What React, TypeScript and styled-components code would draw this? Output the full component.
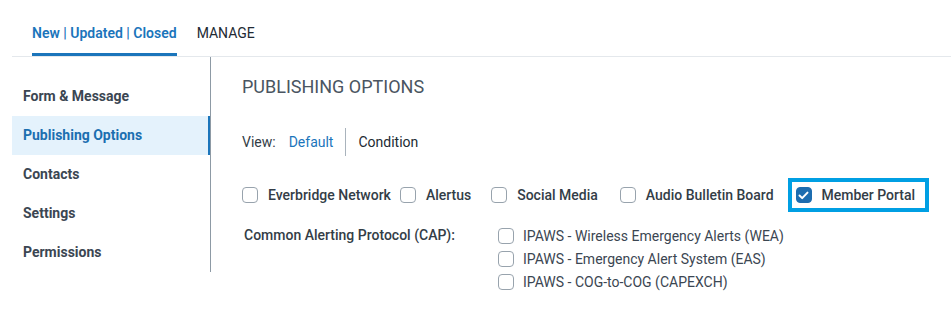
import React, { useState } from 'react';
import styled, { createGlobalStyle } from 'styled-components';

const GlobalStyle = createGlobalStyle`
  body {
    margin: 0;
    background: #ffffff;
    font-family: Roboto, "Liberation Sans", Arial, sans-serif;
    color: #333d47;
  }
`;

const Page = styled.div`
  padding-left: 12px;
  width: 939px;
`;

const TabBar = styled.div`
  display: flex;
  gap: 20px;
  padding-left: 20px;
  border-bottom: 1px solid #e4e8ec;
`;

const Tab = styled.div<{ active?: boolean }>`
  padding: 24px 0 11px;
  line-height: 18px;
  font-size: 14px;
  font-weight: ${({ active }) => (active ? 600 : 400)};
  color: ${({ active }) => (active ? '#1b75bb' : '#222a33')};
  border-bottom: 3px solid ${({ active }) => (active ? '#1b75bb' : 'transparent')};
`;

const Body = styled.div`
  display: flex;
  align-items: flex-start;
`;

const Sidebar = styled.nav`
  width: 198px;
  padding-top: 20px;
  border-right: 1px solid #8d9aa5;
`;

const NavItem = styled.div<{ active?: boolean }>`
  height: 39px;
  display: flex;
  align-items: center;
  padding-left: 11px;
  padding-bottom: 1px;
  box-sizing: border-box;
  font-size: 14px;
  font-weight: 700;
  color: ${({ active }) => (active ? '#1b6fb0' : '#3b4652')};
  background: ${({ active }) => (active ? '#e4f2fc' : 'transparent')};
  border-right: 2px solid ${({ active }) => (active ? '#1b75bb' : 'transparent')};
`;

const Main = styled.section`
  flex: 1;
  padding: 20px 0 0 31px;
`;

const Heading = styled.h2`
  margin: 0;
  font-size: 18px;
  line-height: 20px;
  font-weight: 400;
  color: #4a5561;
`;

const ViewRow = styled.div`
  display: flex;
  align-items: center;
  height: 28px;
  margin-top: 31px;
  font-size: 14px;
`;

const ViewLabel = styled.span`
  color: #333d47;
  margin-right: 13px;
`;

const ViewLink = styled.span<{ active?: boolean }>`
  color: ${({ active }) => (active ? '#1b75bb' : '#222a33')};
`;

const ViewDivider = styled.span`
  width: 1px;
  align-self: stretch;
  background: #a9b3bc;
  margin: 0 12px;
`;

const OptionsRow = styled.div`
  display: flex;
  align-items: center;
  height: 34px;
  margin-top: 22px;
`;

const Option = styled.label<{ trail: number; highlight?: boolean }>`
  display: flex;
  align-items: center;
  gap: 10px;
  font-size: 14px;
  font-weight: 500;
  color: #333d47;
  margin-right: ${({ trail }) => trail}px;
  ${({ highlight }) =>
    highlight
      ? `
    border: 4px solid #009fe3;
    height: 26px;
    padding: 0 10px 0 4px;
    margin-left: 4px;
  `
      : ''}
`;

const Box = styled.span<{ checked?: boolean }>`
  width: 16px;
  height: 16px;
  box-sizing: border-box;
  border-radius: 4px;
  border: 1px solid ${({ checked }) => (checked ? '#1d6db0' : '#98a3ad')};
  background: ${({ checked }) => (checked ? '#1d6db0' : '#fff')};
  display: flex;
  align-items: center;
  justify-content: center;
  flex: none;
`;

const CapRow = styled.div`
  display: grid;
  grid-template-columns: 256px 1fr;
  margin-top: 12px;
`;

const CapLabel = styled.div`
  font-size: 14px;
  font-weight: 500;
  padding-left: 2px;
  line-height: 23px;
  color: #333d47;
`;

const CapList = styled.div`
  display: flex;
  flex-direction: column;
`;

const CapOption = styled.label`
  display: flex;
  align-items: center;
  gap: 9px;
  height: 23px;
  font-size: 14px;
  color: #3b4652;
`;

function Checkbox({ checked }: { checked?: boolean }) {
  return (
    <Box checked={checked}>
      {checked && (
        <svg width="11" height="9" viewBox="0 0 11 9">
          <path d="M1.5 4.5 L4.2 7.1 L9.5 1.6" fill="none" stroke="#fff" strokeWidth="2" strokeLinecap="round" strokeLinejoin="round" />
        </svg>
      )}
    </Box>
  );
}

const NAV = ['Form & Message', 'Publishing Options', 'Contacts', 'Settings', 'Permissions'];

const OPTIONS = [
  { label: 'Everbridge Network', trail: 9 },
  { label: 'Alertus', trail: 20 },
  { label: 'Social Media', trail: 22 },
  { label: 'Audio Bulletin Board', trail: 10 },
];

const CAP = [
  'IPAWS - Wireless Emergency Alerts (WEA)',
  'IPAWS - Emergency Alert System (EAS)',
  'IPAWS - COG-to-COG (CAPEXCH)',
];

export default function App() {
  const [active] = useState('Publishing Options');
  return (
    <Page>
      <GlobalStyle />
      <TabBar>
        <Tab active>New | Updated | Closed</Tab>
        <Tab>MANAGE</Tab>
      </TabBar>
      <Body>
        <Sidebar>
          {NAV.map((n) => (
            <NavItem key={n} active={n === active}>
              {n}
            </NavItem>
          ))}
        </Sidebar>
        <Main>
          <Heading>PUBLISHING OPTIONS</Heading>
          <ViewRow>
            <ViewLabel>View:</ViewLabel>
            <ViewLink active>Default</ViewLink>
            <ViewDivider />
            <ViewLink>Condition</ViewLink>
          </ViewRow>
          <OptionsRow>
            {OPTIONS.map((o) => (
              <Option key={o.label} trail={o.trail}>
                <Checkbox />
                {o.label}
              </Option>
            ))}
            <Option trail={0} highlight>
              <Checkbox checked />
              Member Portal
            </Option>
          </OptionsRow>
          <CapRow>
            <CapLabel>Common Alerting Protocol (CAP):</CapLabel>
            <CapList>
              {CAP.map((c) => (
                <CapOption key={c}>
                  <Checkbox />
                  {c}
                </CapOption>
              ))}
            </CapList>
          </CapRow>
        </Main>
      </Body>
    </Page>
  );
}
